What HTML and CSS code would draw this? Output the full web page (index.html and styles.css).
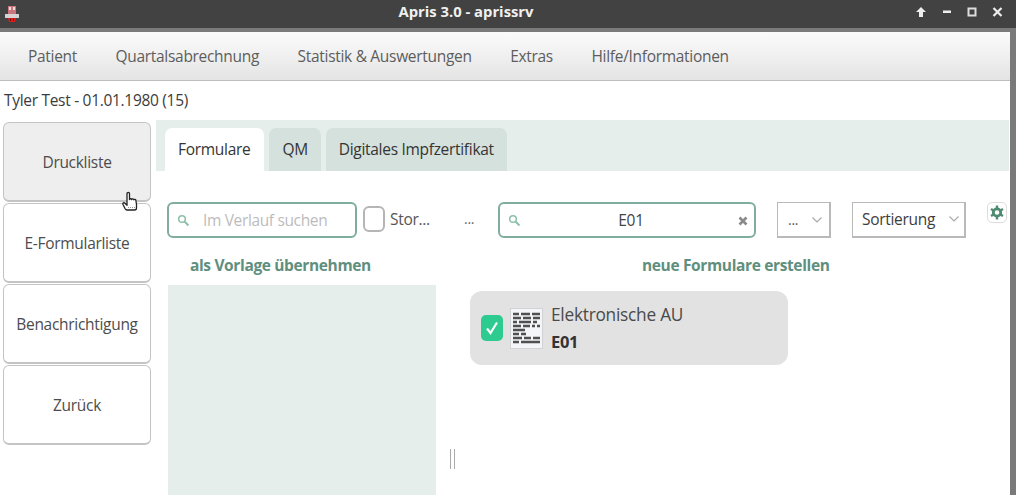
FILE: index.html
```html
<!DOCTYPE html>
<html lang="de">
<head>
<meta charset="utf-8">
<title>Apris 3.0 - aprissrv</title>
<link rel="stylesheet" href="styles.css">
</head>
<body>
<div class="window">
  <header class="titlebar">
    <svg class="app-icon" width="16" height="16" viewBox="0 0 16 16">
      <path d="M4 0h8v8H4z" fill="#c9777d"/>
      <path d="M5 1h2v3H5zM9 1h2v3H9z" fill="#f0dada"/>
      <path d="M1 8h14v4H1z" fill="#d9d3d3"/>
      <path d="M4 12h8l-1 4H5z" fill="#e01b1b"/>
      <path d="M6 12.500h1v2.500H6zM9 12.500h1v2.500H9z" fill="#6a0d0d"/>
    </svg>
    <div class="title">Apris 3.0 - aprissrv</div>
    <div class="winbtns">
      <svg width="12" height="12" viewBox="0 0 12 12"><path d="M6 1l5 5H8v5H4V6H1z" fill="#eee"/></svg>
      <svg width="10" height="12" viewBox="0 0 10 12"><path d="M1 4.500h8v2.500H1z" fill="#eee"/></svg>
      <svg width="10" height="12" viewBox="0 0 10 12"><path d="M1.500 2.500h7v7h-7z" fill="none" stroke="#ddd" stroke-width="2"/></svg>
      <svg width="11" height="12" viewBox="0 0 11 12"><path d="M1.500 2l8 8M9.500 2l-8 8" stroke="#eee" stroke-width="2.200"/></svg>
    </div>
  </header>
  <div class="frame">
    <nav class="menu">
      <span>Patient</span>
      <span>Quartalsabrechnung</span>
      <span>Statistik &amp; Auswertungen</span>
      <span>Extras</span>
      <span>Hilfe/Informationen</span>
    </nav>
    <div class="patient">Tyler Test - 01.01.1980 (15)</div>
    <div class="body">
      <aside class="side">
        <button class="side-btn hover">Druckliste</button>
        <button class="side-btn">E-Formularliste</button>
        <button class="side-btn">Benachrichtigung</button>
        <button class="side-btn">Zurück</button>
      </aside>
      <main class="main">
        <div class="tabs">
          <div class="tab active">Formulare</div>
          <div class="tab">QM</div>
          <div class="tab">Digitales Impfzertifikat</div>
        </div>
        <div class="toolbar">
          <div class="search left">
            <svg class="lens" width="13" height="13" viewBox="0 0 13 13"><circle cx="5" cy="5" r="3.300" fill="none" stroke="#8dbfa9" stroke-width="1.500"/><path d="M7.500 7.500l4 4" stroke="#8dbfa9" stroke-width="2"/></svg>
            <span class="placeholder">Im Verlauf suchen</span>
          </div>
          <div class="check"></div>
          <span class="check-label">Stor...</span>
          <span class="dots">...</span>
          <div class="search right">
            <svg class="lens" width="13" height="13" viewBox="0 0 13 13"><circle cx="5" cy="5" r="3.300" fill="none" stroke="#8dbfa9" stroke-width="1.500"/><path d="M7.500 7.500l4 4" stroke="#8dbfa9" stroke-width="2"/></svg>
            <span class="value">E01</span>
            <svg class="clear" width="10" height="10" viewBox="0 0 10 10"><path d="M1.500 1.500l7 7M8.500 1.500l-7 7" stroke="#8a8a8a" stroke-width="2.600"/></svg>
          </div>
          <div class="select small">
            <span class="sel-dots">...</span>
            <svg width="12" height="8" viewBox="0 0 12 8"><path d="M1.500 1.500L6 6l4.500-4.500" fill="none" stroke="#a9a9a9" stroke-width="1.200"/></svg>
          </div>
          <div class="select wide">
            <span>Sortierung</span>
            <svg width="12" height="8" viewBox="0 0 12 8"><path d="M1.500 1.500L6 6l4.500-4.500" fill="none" stroke="#a9a9a9" stroke-width="1.200"/></svg>
          </div>
          <div class="gear">
            <svg width="14" height="15" viewBox="0 0 14 15"><circle cx="7" cy="7.500" r="3.700" fill="none" stroke="#4f8a72" stroke-width="2.800"/><path d="M7 .5v3M7 11.500v3M1 4l2.500 1.500M10.500 9.500L13 11M1 11l2.500-1.500M10.500 5.500L13 4" stroke="#4f8a72" stroke-width="2.400"/></svg>
          </div>
        </div>
        <div class="columns">
          <section class="col-left">
            <h2 class="head">als Vorlage übernehmen</h2>
            <div class="panel"></div>
          </section>
          <section class="col-right">
            <h2 class="head">neue Formulare erstellen</h2>
            <div class="card">
              <div class="tick">
                <svg width="16" height="16" viewBox="0 0 16 16"><path d="M3 8.500l3.500 4.500L13 2.500" fill="none" stroke="#fff" stroke-width="2.200"/></svg>
              </div>
              <svg class="doc" width="33" height="41" viewBox="0 0 33 41">
                <rect x=".5" y=".5" width="32" height="40" fill="#f3f5f8" stroke="#d0d3d6"/>
                <path d="M3 6h6M11 6h9M22 6h8M3 10h8M13 10h8M23 10h7M3 14h4M9 14h12M23 14h4M3 18h8M13 18h7M22 18h3M27 18h3M3 22h12M3 26h6M11 26h5M3 30h9M14 30h7M23 30h7M3 34h6M11 34h19" stroke="#3f3f3f" stroke-width="2.300" opacity=".9"/>
              </svg>
              <div class="card-text">
                <div class="card-name">Elektronische AU</div>
                <div class="card-code">E01</div>
              </div>
            </div>
            <div class="splitter"></div>
          </section>
        </div>
      </main>
    </div>
  </div>
  <svg class="cursor" width="18" height="24" viewBox="0 0 18 24">
    <path d="M5 2.500c0-1.500 2.500-1.500 2.500 0v6c0-1 2-1 2.200 0 .3-.8 2-.8 2.200.3.400-.7 2-.5 2 .7l.6 4v3.500c0 1-1 2-2 2H5c-1 0-1.500-.6-2-1.500l-2-4c-.6-1.500 1-2.300 2-1.300l2 2z" fill="#fff" stroke="#222" stroke-width="1.300" stroke-linejoin="round"/>
    <path d="M6 16.500h8" stroke="#999" stroke-dasharray="1 1"/>
  </svg>
</div>
</body>
</html>
```

FILE: styles.css
```css
* { box-sizing: border-box; }
html, body { margin: 0; height: 100%; overflow: hidden; background: #fff; }
body { font-family: "Open Sans", "Noto Sans", sans-serif; color: #3c3c3c; letter-spacing: -0.3px; }
.window { position: relative; width: 1016px; height: 495px; display: flex; flex-direction: column; background: #7a7a7a; }
.titlebar { height: 28px; flex: none; background: #424242; display: flex; align-items: center; position: relative; padding: 0 13px 0 4px; }
.app-icon { flex: none; margin-top: -1px; }
.title { position: absolute; left: 0; right: 0; top: 2px; text-align: center; color: #f0f0f0; font-size: 14.800px; font-weight: 700; line-height: 18px; padding-right: 84px; letter-spacing: 0; }
.winbtns { margin-left: auto; display: flex; align-items: center; gap: 15px; margin-top: -4px; }
.frame { flex: 1; margin: 4px 6px 0 0; background: #fff; display: flex; flex-direction: column; min-height: 0; }
.menu { height: 49px; flex: none; display: flex; align-items: center; gap: 38.500px; padding: 0 0 0 28px; font-size: 15.500px; color: #5d5d5d; background: linear-gradient(#fbfbfb, #e4e4e4); border-bottom: 1px solid #bdbdbd; }
.patient { height: 39px; flex: none; padding: 0 0 0 4px; line-height: 39px; font-size: 15.500px; color: #3c3c3c; }
.body { flex: 1; display: flex; min-height: 0; }
.side { width: 156px; flex: none; padding: 2px 0 0 3px; display: flex; flex-direction: column; gap: 1px; }
.side-btn { width: 148px; height: 80px; padding: 1px 0 0; border: 1px solid #c4c4c4; border-bottom-width: 2px; border-radius: 6px; background: #fff; font: 15.500px "Open Sans", "Noto Sans", sans-serif; letter-spacing: -0.3px; color: #4c4c4c; }
.side-btn.hover { background: #eeeeee; }
.main { flex: 1; min-width: 0; display: flex; flex-direction: column; }
.tabs { height: 51px; flex: none; background: #e5eeeb; display: flex; align-items: flex-end; gap: 5px; padding-left: 9px; margin-right: 1px; }
.tab { height: 43px; padding: 0 13px; border-radius: 7px 7px 0 0; background: #d5e1dd; font-size: 15.500px; line-height: 43px; color: #343434; }
.tab.active { background: #fff; padding: 0 14px 0 13px; }
.toolbar { height: 67px; flex: none; position: relative; display: flex; align-items: flex-start; padding: 31px 0 0 11px; }
.search { height: 36px; border: 2px solid #7fae9f; border-radius: 6px; display: flex; align-items: center; padding-left: 8px; background: #fff; font-size: 15.500px; flex: none; }
.search.left { width: 190px; }
.search.right { width: 258px; margin-left: 24px; position: relative; }
.lens { flex: none; }
.placeholder { margin-left: 13px; color: #bcbcbc; white-space: nowrap; letter-spacing: -0.35px; }
.value { position: absolute; left: 8px; right: 0; text-align: center; color: #444; }
.clear { position: absolute; right: 6px; top: 12px; }
.check { width: 22px; height: 26px; margin: 4px 0 0 6px; border: 2px solid #b5b5b5; border-radius: 6px; flex: none; }
.check-label { margin: 6px 0 0 5px; font-size: 15.500px; color: #555; width: 47px; flex: none; white-space: nowrap; }
.dots { margin: 7px 0 0 27px; font-size: 14px; color: #666; width: 10px; flex: none; }
.select { height: 36px; border: 1px solid #b9b9b9; border-bottom-width: 2px; border-right-width: 2px; background: #fff; display: flex; align-items: center; justify-content: space-between; flex: none; }
.select.small { width: 54px; margin-left: 21px; padding: 0 6px 0 10px; }
.select.wide { width: 114px; margin-left: 21px; padding: 0 4px 2px 9px; font-size: 15.500px; color: #3d3d3d; }
.sel-dots { font-size: 14px; color: #555; }
.gear { position: absolute; left: 831px; top: 31px; width: 20px; height: 21px; border: 1px solid #dcdcdc; border-radius: 5px; display: flex; align-items: center; justify-content: center; }
.columns { flex: 1; display: flex; min-height: 0; }
.col-left { width: 268px; margin-left: 12px; flex: none; display: flex; flex-direction: column; }
.head { margin: 0; font-size: 15.500px; font-weight: 700; line-height: 22px; color: #5f8f7e; padding-top: 16px; letter-spacing: -0.36px; }
.col-left .head { padding-left: 22px; height: 47px; }
.panel { flex: 1; background: #e5eeeb; }
.col-right { flex: 1; position: relative; min-width: 0; padding-left: 34px; }
.col-right .head { padding-left: 172px; height: 53px; }
.card { width: 318px; height: 74px; border-radius: 12px; background: #e2e2e2; display: flex; align-items: center; padding-left: 11px; }
.tick { width: 22px; height: 26px; border-radius: 5px; background: #2ecb91; display: flex; align-items: center; justify-content: center; flex: none; }
.doc { margin-left: 7px; flex: none; }
.card-text { margin-left: 8px; margin-top: 4px; }
.card-name { font-size: 17.300px; line-height: 24px; color: #4a4a4a; letter-spacing: -0.25px; }
.card-code { font-size: 16.500px; font-weight: 700; line-height: 30px; color: #333; }
.splitter { position: absolute; left: 14px; top: 211px; width: 5px; height: 20px; border-left: 1px solid #aaa; border-right: 1px solid #aaa; }
.cursor { position: absolute; left: 122px; top: 191px; }
```
